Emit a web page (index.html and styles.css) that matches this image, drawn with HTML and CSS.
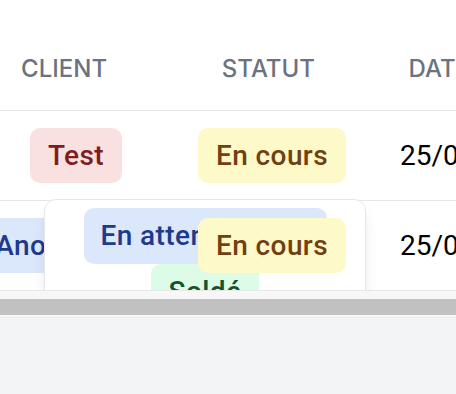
FILE: index.html
```html
<!DOCTYPE html>
<html lang="fr">
<head>
    <meta charset="UTF-8">
    <meta name="viewport" content="width=device-width, initial-scale=1.0">
    <title>Commandes</title>
    <link rel="stylesheet" href="styles.css">
</head>
<body>
    <div class="scroller">
        <div class="table">
            <div class="row head">
                <div class="cell col-client">Client</div>
                <div class="cell col-statut">Statut</div>
                <div class="cell col-date">Date</div>
            </div>
            <div class="row">
                <div class="cell col-client"><span class="badge red">Test</span></div>
                <div class="cell col-statut"><span class="badge yellow">En cours</span></div>
                <div class="cell col-date">25/02/2025</div>
            </div>
            <div class="row">
                <div class="cell col-client"><span class="badge blue shifted">Anonyme</span></div>
                <div class="cell col-statut"><span class="badge yellow on-top">En cours</span></div>
                <div class="cell col-date">25/02/2025</div>
            </div>

            <div class="menu">
                <span class="badge blue wide">En attente client</span>
                <span class="badge green">Soldé</span>
                <span class="badge yellow">En cours</span>
            </div>
        </div>
    </div>
    <div class="scrollbar">
        <div class="thumb"></div>
    </div>
    <div class="footer"></div>
</body>
</html>
```

FILE: styles.css
```css
body {
    margin: 0;
    font-family: 'Roboto', 'Liberation Sans', sans-serif;
    background-color: #f3f4f6;
    width: 456px;
    height: 394px;
    overflow: hidden;
}
.scroller {
    height: 290px;
    overflow: hidden;
    background-color: #fff;
}
.table {
    position: relative;
    width: 600px;
}
.row {
    display: flex;
    height: 90px;
    border-bottom: 1px solid #e5e7eb;
    box-sizing: border-box;
}
.row.head {
    height: 111px;
    align-items: flex-end;
    padding-bottom: 26px;
    line-height: 30px;
    text-transform: uppercase;
}
.cell {
    display: flex;
    align-items: center;
    font-size: 28px;
    color: #000;
}
.head .cell {
    font-family: 'Inter', 'Liberation Sans', sans-serif;
    font-size: 24px;
    font-weight: 500;
    color: #6b7280;
}
.col-client {
    width: 152px;
    justify-content: center;
}
.col-statut {
    width: 240px;
    justify-content: center;
}
.col-date {
    width: 200px;
    padding-left: 8px;
}
.head .col-client {
    padding-right: 18px;
    box-sizing: border-box;
}
.head .col-statut {
    padding-left: 14px;
    box-sizing: border-box;
}
.head .col-date {
    padding-left: 32px;
}
.badge {
    display: inline-block;
    flex-shrink: 0;
    padding: 7px 18px;
    border-radius: 10px;
    font-size: 28px;
    font-weight: 500;
    letter-spacing: 0.4px;
    line-height: 41px;
    white-space: nowrap;
}
.red {
    background-color: #f9e1e1;
    color: #7f1d1d;
}
.yellow {
    background-color: #fef9c8;
    color: #713f12;
}
.blue {
    background-color: #dbe7fb;
    color: #1e3a8a;
}
.green {
    background-color: #dcfce7;
    color: #14532d;
}
.shifted {
    margin-right: 40px;
}
.on-top {
    position: relative;
    z-index: 2;
}
.menu {
    position: absolute;
    z-index: 1;
    top: 199px;
    left: 44px;
    width: 322px;
    box-sizing: border-box;
    padding: 8px 0;
    display: flex;
    flex-direction: column;
    align-items: center;
    background-color: #fff;
    border: 1px solid #e5e7eb;
    border-radius: 12px;
    box-shadow: 0 10px 15px -3px rgba(0, 0, 0, 0.1), 0 4px 6px -4px rgba(0, 0, 0, 0.1);
}
.menu .badge {
    line-height: 42px;
}
.menu .wide {
    width: 243px;
    box-sizing: border-box;
    padding-left: 17px;
}
.scrollbar {
    height: 28px;
    box-sizing: border-box;
    padding: 8px 0 4px;
    background-color: #f7f7f7;
    border-top: 1px solid #e8e8e8;
    border-bottom: 1px solid #ebebeb;
}
.thumb {
    height: 16px;
    background-color: #c1c1c1;
}
```
